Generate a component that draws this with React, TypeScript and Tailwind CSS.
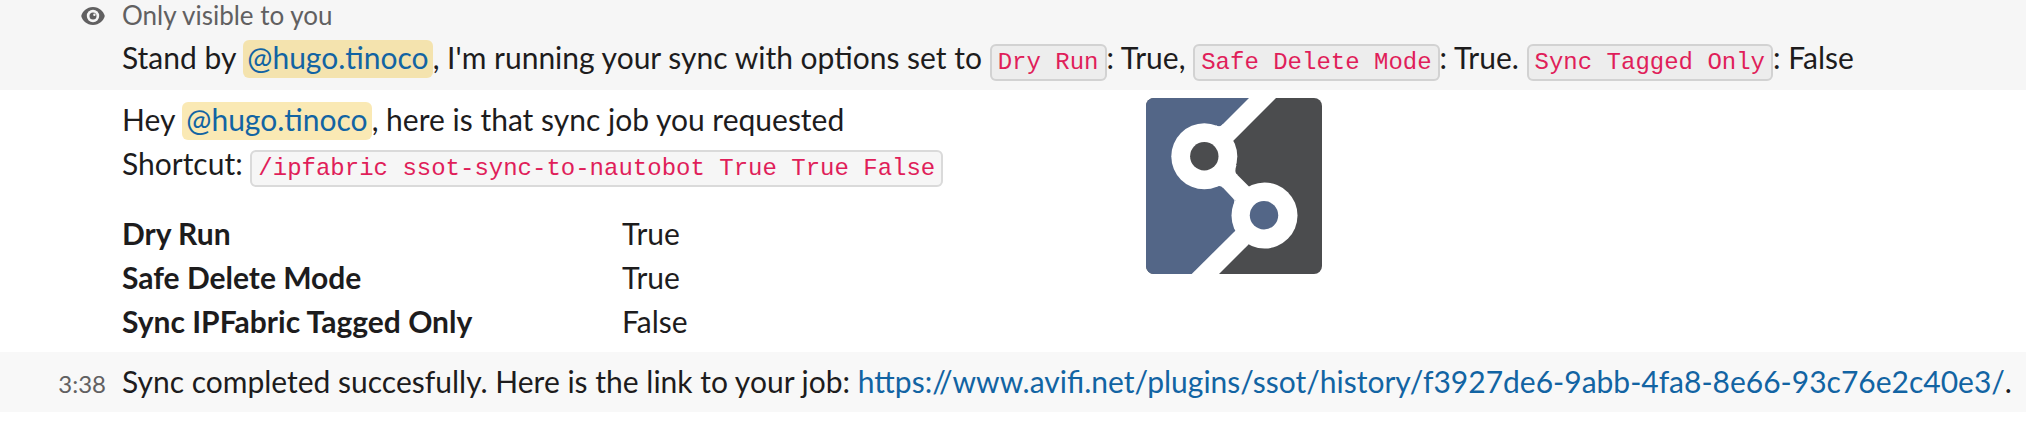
import type { ReactNode } from "react";

function Mention({ children }: { children: ReactNode }) {
  return (
    <a className="inline-block rounded-md bg-[#f2c744]/40 px-1 pb-1 leading-[34px] text-[#1264a3]">{children}</a>
  );
}

function Code({ children }: { children: ReactNode }) {
  return (
    <code className="rounded-md border-2 border-[#1d1c1d]/[0.13] bg-[#1d1c1d]/[0.04] px-1.5 py-[3px] font-['Liberation_Mono',monospace] text-[24px] leading-none text-[#e01e5a]">
      {children}
    </code>
  );
}

function EyeIcon() {
  return (
    <svg viewBox="0 0 24 18" className="h-[18px] w-6" fill="none">
      <path d="M12 0C5.6 0 1.7 4.6.5 8a2.6 2.6 0 0 0 0 2C1.7 13.400 5.600 18 12 18s10.300-4.600 11.500-8a2.600 2.600 0 0 0 0-2C22.300 4.600 18.400 0 12 0Z" fill="#616061" />
      <circle cx="12" cy="9" r="6.200" fill="#f6f6f6" />
      <circle cx="12" cy="9" r="3.500" fill="#616061" />
      <circle cx="13.400" cy="7.700" r="1.200" fill="#f6f6f6" />
    </svg>
  );
}

function Logo() {
  return (
    <svg viewBox="0 0 176 176" className="mt-px h-44 w-44 rounded-lg">
      <path d="M0 0H176V176H0Z" fill="#4b4c4e" />
      <path d="M0 0H116L58 58 118 118 60 176H0Z" fill="#536687" />
      <g fill="#fff">
        <path d="M103 0H130L87.300 42.700 60 60V43Z" />
        <path d="M76.300 89 88 101.500 118 118 102.700 88.300 90.700 76.300 58 58Z" />
        <path d="M89.300 132.700 45.700 176H73L102.300 146.700 118 118Z" />
        <circle cx="58.300" cy="58.300" r="33" />
        <circle cx="118.500" cy="117.500" r="33" />
        <path d="M70 27.600Q74.500 29.400 77 26V33H70Z" />
        <path d="M90.500 67Q88 74 91 76.800L86 78 84 67Z" />
        <path d="M70 88.800Q74.500 87 77 89.800L80 84 72 80Z" />
        <path d="M87.500 101Q89.200 103 87.300 108L92 106Z" />
      </g>
      <circle cx="58.300" cy="58.300" r="14.200" fill="#4b4c4e" />
      <circle cx="118" cy="117.300" r="14.200" fill="#536687" />
    </svg>
  );
}

const fields = [
  ["Dry Run", "True"],
  ["Safe Delete Mode", "True"],
  ["Sync IPFabric Tagged Only", "False"],
];

export default function App() {
  return (
    <main className="h-[422px] overflow-hidden bg-white font-['Lato',sans-serif] text-[30px] leading-[44px] whitespace-nowrap text-[#1d1c1d]">
      <section className="h-[90px] bg-[#f6f6f6]">
        <div className="flex h-[35px] items-start text-[26px] leading-[30px] text-[#616061]">
          <div className="flex w-[122px] justify-end pt-[7px] pr-[17px]">
            <EyeIcon />
          </div>
          <span>Only visible to you</span>
        </div>
        <p className="pl-[122px]">
          Stand by <Mention>@hugo.tinoco</Mention>, I'm running your sync with options set to{" "}
          <Code>Dry Run</Code>: True, <Code>Safe Delete Mode</Code>: True.{" "}
          <Code>Sync Tagged Only</Code>: False
        </p>
      </section>
      <section className="flex h-[262px] pt-[7px] pl-[122px]">
        <div className="w-[1024px]">
          <p>
            Hey <Mention>@hugo.tinoco</Mention>, here is that sync job you requested
          </p>
          <p>
            Shortcut: <Code>/ipfabric ssot-sync-to-nautobot True True False</Code>
          </p>
          <dl className="mt-[26px]">
            {fields.map(([name, value]) => (
              <div key={name} className="grid grid-cols-[500px_1fr]">
                <dt className="font-bold">{name}</dt>
                <dd>{value}</dd>
              </div>
            ))}
          </dl>
        </div>
        <Logo />
      </section>
      <section className="flex h-[60px] items-baseline bg-[#f8f8f8] pt-[7px]">
        <time className="w-[122px] pr-4 text-right text-[24px] text-[#616061]">3:38</time>
        <p>
          Sync completed succesfully. Here is the link to your job:{" "}
          <a className="text-[#1264a3]">https://www.avifi.net/plugins/ssot/history/f3927de6-9abb-4fa8-8e66-93c76e2c40e3/</a>.
        </p>
      </section>
    </main>
  );
}
